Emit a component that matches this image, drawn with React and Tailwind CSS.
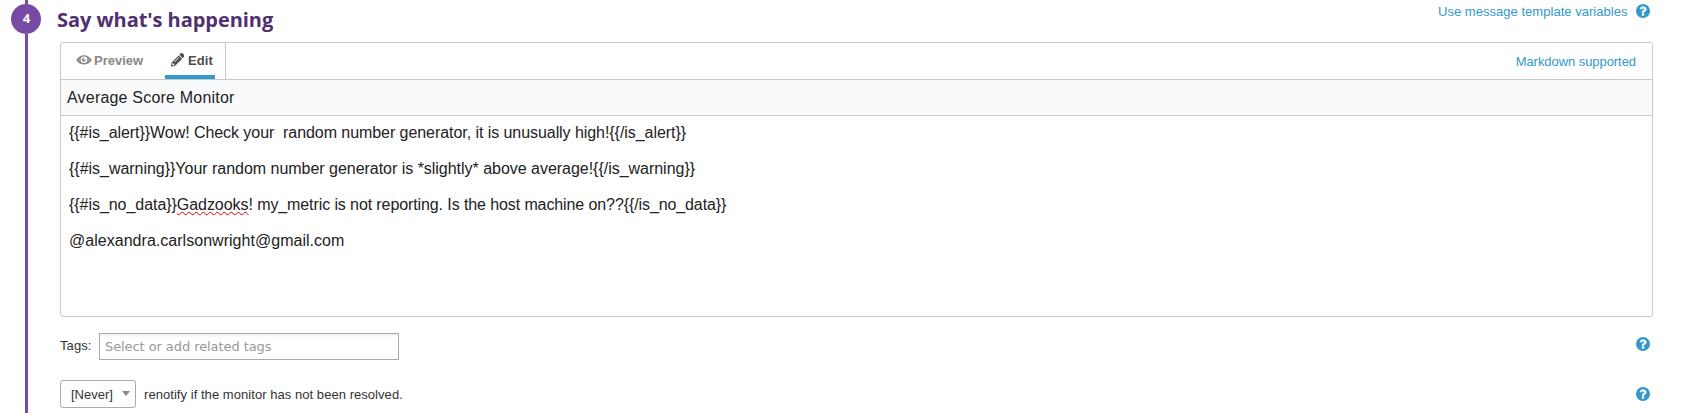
import React from "react";
import { FaPencilAlt } from "react-icons/fa";

function HelpIcon() {
  return (
    <svg viewBox="0 0 1536 1536" className="block size-[14px] shrink-0" fill="#3399cc" aria-label="Help">
      <path d="M896 1248v-192q0-14-9-23t-23-9h-192q-14 0-23 9t-9 23v192q0 14 9 23t23 9h192q14 0 23-9t9-23zm256-672q0-88-55.500-163t-138.500-116-170-41q-243 0-371 213-15 24 8 42l132 100q7 6 19 6 16 0 25-12 53-68 86-92 34-24 86-24 48 0 85.500 26t37.500 59q0 38-20 61t-68 45q-63 28-115.500 86.500t-52.500 125.500v36q0 14 9 23t23 9h192q14 0 23-9t9-23q0-19 21.500-49.500t54.500-49.500q32-18 49-28.500t46-35 44.500-48 28-60.500 12.500-81zm384 192q0 209-103 385.500t-279.500 279.500-385.500 103-385.500-103-279.500-279.500-103-385.500 103-385.500 279.500-279.500 385.500-103 385.500 103 279.500 279.500 103 385.500z" />
    </svg>
  );
}

function EyeIcon() {
  return (
    <svg viewBox="0 0 16 10" className="block h-[10px] w-[16px]">
      <path d="M0.200 5C2 1.800 4.800 0.200 8 0.200S14 1.800 15.800 5C14 8.200 11.200 9.600 8 9.600S2 8.200 0.200 5Z" fill="#888" />
      <path d="M1.900 5Q2.900 3.300 4.400 2.400Q3.400 5 4.700 7.500Q2.900 6.600 1.900 5ZM14.100 5Q13.100 3.300 11.600 2.400Q12.600 5 11.300 7.500Q13.100 6.600 14.100 5Z" fill="#fff" fillOpacity=".2" />
      <circle cx="8" cy="4.700" r="3.300" fill="#fff" />
      <path d="M8 2.700V4.700H10A2 2 0 1 1 8 2.700Z" fill="#888" />
    </svg>
  );
}

const lines = [
  <span className="tracking-[-0.060px]">{"{{#is_alert}}Wow! Check your  random number generator, it is unusually high!{{/is_alert}}"}</span>,
  <span className="tracking-[-0.026px]">{"{{#is_warning}}Your random number generator is *slightly* above average!{{/is_warning}}"}</span>,
  <span>
    <span className="tracking-[-0.050px]">{"{{#is_no_data}}"}</span>
    <span className="tracking-[-0.050px] underline decoration-[#e00000] decoration-wavy decoration-1 [text-decoration-skip-ink:none]">Gadzooks</span>
    <span className="tracking-[-0.100px]">{"! my_metric is not reporting. Is the host machine on??{{/is_no_data}}"}</span>
  </span>,
  <span className="tracking-[0.030px]">@alexandra.carlsonwright@gmail.com</span>,
];

export default function App() {
  return (
    <div className="flex h-[413px] w-[1681px] overflow-hidden bg-white font-['Liberation_Sans',sans-serif] text-[13px] text-[#333]">
      <div className="flex w-[60px] shrink-0 flex-col items-start">
        <div className="ml-[25px] h-1 w-[3px] bg-[#774aa4]" />
        <div className="ml-[11px] flex size-[30px] items-center justify-center rounded-full bg-[#774aa4] pl-px font-['Open_Sans',sans-serif] font-bold text-white">4</div>
        <div className="ml-[25px] w-[3px] flex-1 bg-[#774aa4]" />
      </div>

      <div className="flex w-[1593px] flex-col">
        <header className="flex h-[42px] shrink-0 items-start justify-between">
          <h2 className="-ml-[3px] pt-[6px] font-['Open_Sans',sans-serif] text-[20px] leading-[27px] font-bold tracking-[-0.050px] text-[#50306f]">Say what's happening</h2>
          <div className="flex items-start gap-[8.500px] pt-[3px] pr-[3px] text-[#3399cc]">
            <a className="pt-px leading-[16px] tracking-[0.030px]">Use message template variables</a>
            <span className="pt-[0.500px]"><HelpIcon /></span>
          </div>
        </header>

        <section className="flex h-[275px] shrink-0 flex-col rounded-[3px] border border-[#c8c8c8]">
          <div className="flex h-[37px] shrink-0 justify-between border-b border-[#c8c8c8]">
            <div className="flex border-r border-[#c8c8c8] pr-[10px] pl-[15px] font-bold">
              <div className="flex w-[89px] items-start gap-[2px] text-[#888]">
                <span className="pt-[12px]"><EyeIcon /></span>
                <span className="pt-[10px] leading-[16px]">Preview</span>
              </div>
              <div className="flex w-[50px] items-start gap-[4px] border-b-4 border-[#3399cc] pl-[5.500px] text-[#4d4d4d]">
                <FaPencilAlt className="mt-[10px] size-[13.500px]" />
                <span className="pt-[10px] leading-[16px] tracking-[0.100px]">Edit</span>
              </div>
            </div>
            <a className="pt-[11px] pr-[16px] leading-[16px] tracking-[-0.060px] text-[#3399cc]">Markdown supported</a>
          </div>
          <div className="h-[36px] shrink-0 border-b border-[#c8c8c8] bg-[#f9fafc] pt-[8px] pl-[6px] text-[16px] leading-[20px] tracking-[0.200px] text-[#222]">Average Score Monitor</div>
          <div className="flex flex-col gap-[18px] pt-[8px] pl-[8px] text-[16px] leading-[18px] whitespace-pre text-[#222]">
            {lines.map((line, i) => <p key={i}>{line}</p>)}
          </div>
        </section>

        <div className="flex h-[63px] shrink-0 items-start justify-between pt-[16px] pr-[3px]">
          <div className="flex items-start">
            <label className="w-[39px] pt-[5px] leading-[16px] tracking-[0.100px]">Tags:</label>
            <div className="flex h-[27px] w-[300px] items-center border border-[#aaa] bg-gradient-to-b from-[#eee] to-white to-15% pl-[5px] font-['DejaVu_Sans',sans-serif] text-[13px] tracking-[-0.080px] text-[#999]">Select or add related tags</div>
          </div>
          <div className="pt-[3.500px]"><HelpIcon /></div>
        </div>

        <div className="flex items-start justify-between pr-[3px]">
          <div className="flex items-center">
            <div className="flex h-[28px] w-[76px] items-center gap-[9px] rounded-[3px] border border-[#aaa] pl-[10px]">
              <span className="pt-[2px]">[Never]</span>
              <svg viewBox="0 0 8 5" className="-mt-px h-[5px] w-[8px]"><path d="M0 0h8L4 5Z" fill="#888" /></svg>
            </div>
            <span className="pt-[2px] pl-[8px] tracking-[0.050px]">renotify if the monitor has not been resolved.</span>
          </div>
          <div className="pt-[6.500px]"><HelpIcon /></div>
        </div>
      </div>
    </div>
  );
}
